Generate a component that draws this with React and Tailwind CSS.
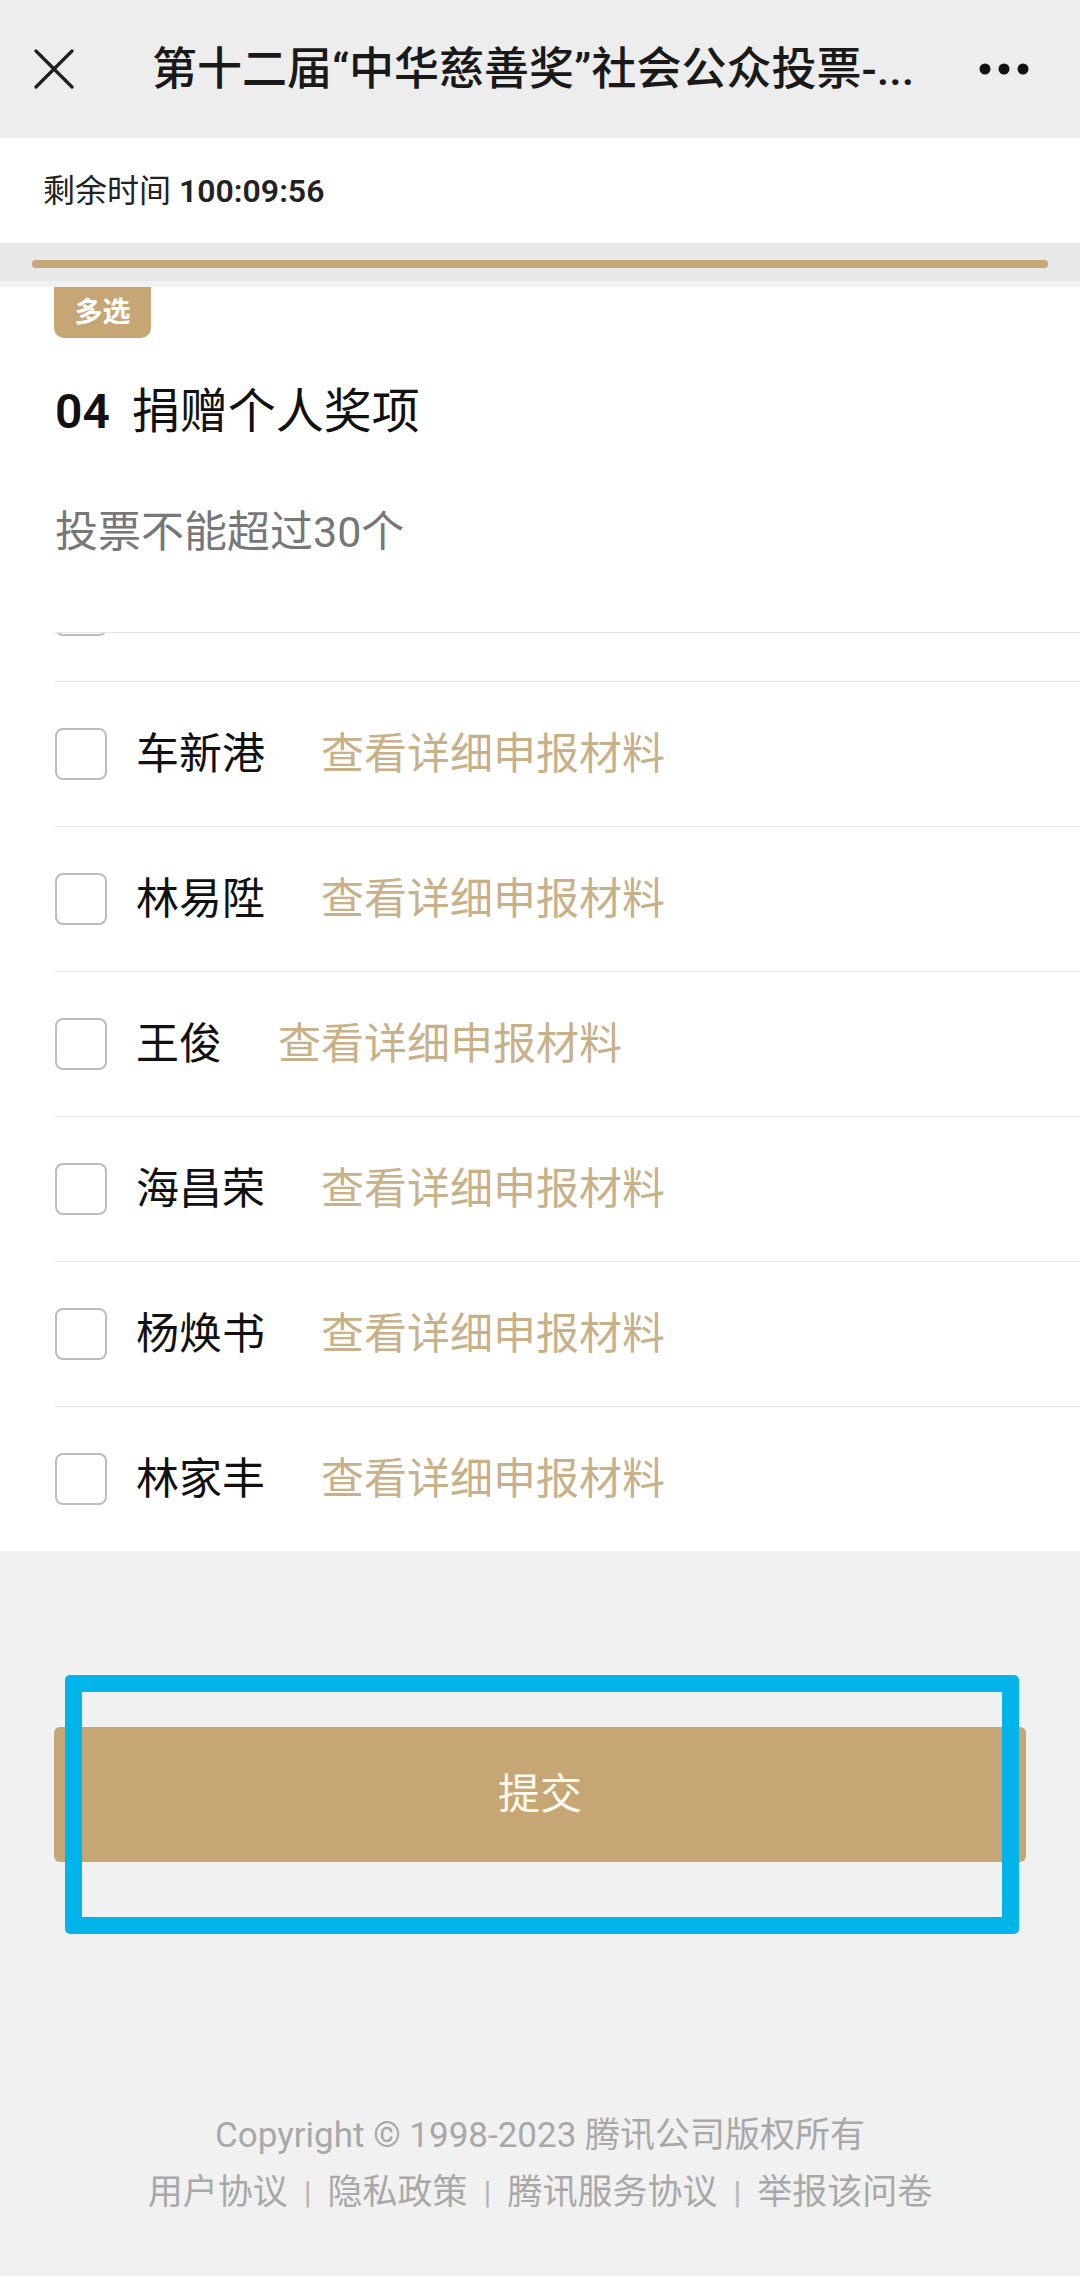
import { useState } from "react";

const candidates = [
  { id: 1, name: "车新港" },
  { id: 2, name: "林易陞" },
  { id: 3, name: "王俊" },
  { id: 4, name: "海昌荣" },
  { id: 5, name: "杨焕书" },
  { id: 6, name: "林家丰" },
];

const footerLinks = ["用户协议", "隐私政策", "腾讯服务协议", "举报该问卷"];

function CloseIcon() {
  return (
    <svg width="40" height="40" viewBox="0 0 40 40" className="text-[#1f1f1f]">
      <path d="M2 2 L38 38 M38 2 L2 38" stroke="currentColor" strokeWidth="3.2" strokeLinecap="round" />
    </svg>
  );
}

function MoreIcon() {
  return (
    <svg width="52" height="14" viewBox="0 0 52 14" className="text-[#111]">
      <circle cx="7" cy="7" r="5.5" fill="currentColor" />
      <circle cx="26" cy="7" r="5.5" fill="currentColor" />
      <circle cx="45" cy="7" r="5.5" fill="currentColor" />
    </svg>
  );
}

function Checkbox({ checked, onClick }) {
  return (
    <button
      type="button"
      onClick={onClick}
      className={`w-[52px] h-[52px] shrink-0 rounded-[8px] border-2 ${
        checked ? "border-[#c6a675] bg-[#c6a675]" : "border-[#bdbdbd] bg-white"
      }`}
    />
  );
}

export default function App() {
  const [selected, setSelected] = useState([]);

  const toggle = (id) => {
    setSelected((prev) =>
      prev.includes(id) ? prev.filter((x) => x !== id) : [...prev, id],
    );
  };

  return (
    <div className="min-h-[2276px] w-[1080px] bg-[#f1f1f1] font-[Roboto,'Noto_Sans_CJK_SC',sans-serif]">
      {/* top bar */}
      <div className="h-[138px] bg-[#ededed] flex items-center">
        <div className="ml-[34px] w-[40px] h-[40px] flex items-center justify-center">
          <CloseIcon />
        </div>
        <h1 className="ml-[78px] whitespace-nowrap text-[45px] font-medium text-[#191919] leading-none">
          第十二届“中华慈善奖”社会公众投票-...
        </h1>
        <div className="ml-auto mr-[50px]">
          <MoreIcon />
        </div>
      </div>

      {/* countdown */}
      <div className="h-[105px] bg-white flex items-center pl-[43px] text-[32px] text-[#222]">
        剩余时间 <span className="ml-[8px] font-semibold">100:09:56</span>
      </div>

      {/* progress */}
      <div className="h-[38px] bg-[#e8e8e8] pt-[17px] px-[32px]">
        <div className="h-[8px] rounded-full bg-[#c6a675]" />
      </div>

      {/* question */}
      <div className="bg-white">
        <div className="ml-[54px] mt-[6px] w-[97px] h-[51px] rounded-b-[10px] bg-[#c6a675] flex items-center justify-center text-[28px] font-bold text-white">
          多选
        </div>
        <div className="ml-[55px] mt-[42px] h-[64px] flex items-center text-[48px] text-[#111]">
          <span className="font-semibold">04</span>
          <span className="ml-[22px]">捐赠个人奖项</span>
        </div>
        <div className="ml-[55px] mt-[58px] h-[60px] flex items-center text-[43px] text-[#777]">
          投票不能超过30个
        </div>

        <div className="ml-[55px] mt-[70px]">
          <div className="h-[49px] border-t border-[#e6e6e6] overflow-hidden">
            <div className="-mt-[49px] w-[52px] h-[52px] rounded-[8px] border-2 border-[#bdbdbd]" />
          </div>
          {candidates.map((c) => (
            <div
              key={c.id}
              className="h-[145px] border-t border-[#e6e6e6] flex items-center"
            >
              <Checkbox
                checked={selected.includes(c.id)}
                onClick={() => toggle(c.id)}
              />
              <span className="ml-[29px] text-[43px] text-[#111]">{c.name}</span>
              <a className="ml-[56px] text-[43px] text-[#c8b089]">
                查看详细申报材料
              </a>
            </div>
          ))}
        </div>
      </div>

      {/* submit */}
      <div className="relative pt-[176px] px-[54px]">
        <button className="w-full h-[135px] rounded-[6px] bg-[#c6a675] text-[42px] text-[#fff8ec]">
          提交
        </button>
        <div className="absolute left-[65px] top-[124px] w-[954px] h-[259px] border-[17px] border-[#02b4e9] rounded-[5px]" />
      </div>

      {/* footer */}
      <div className="mt-[245px] text-center text-[35px] text-[#a8a8a8]">
        <p className="h-[57px] leading-[57px]">Copyright © 1998-2023 腾讯公司版权所有</p>
        <div className="h-[57px] leading-[57px] flex justify-center items-center">
          {footerLinks.map((l, i) => (
            <span key={l} className="flex items-center">
              {i > 0 && <span className="mx-[16px] text-[32px] text-[#b5b5b5]">|</span>}
              {l}
            </span>
          ))}
        </div>
      </div>
    </div>
  );
}
